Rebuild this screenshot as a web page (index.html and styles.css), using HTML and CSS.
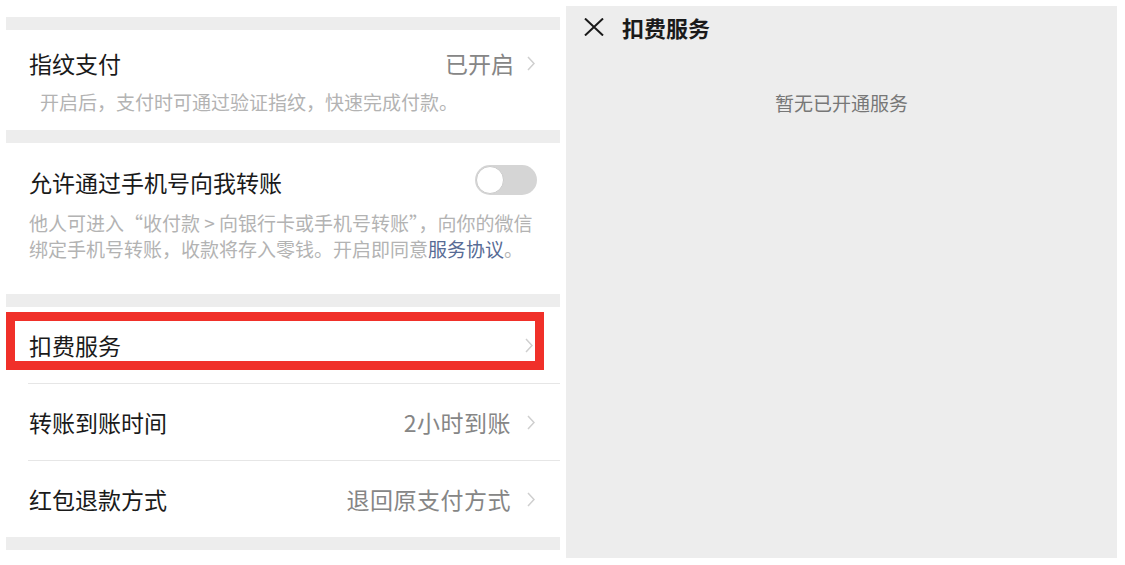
FILE: index.html
```html
<!DOCTYPE html>
<html lang="zh-CN">
<head>
    <meta charset="UTF-8">
    <title>支付设置</title>
    <link rel="stylesheet" href="styles.css">
</head>
<body>
    <div class="settings">
        <div class="top-space"></div>
        <div class="gap"></div>

        <section class="block fingerprint">
            <div class="row-head">
                <span class="title">指纹支付</span>
                <span class="value">已开启
                    <svg class="chev" width="8" height="15" viewBox="0 0 8 15"><polyline points="1,1 7,7.5 1,14" fill="none" stroke="#cfcfcf" stroke-width="1.5"/></svg>
                </span>
            </div>
            <p class="desc indent">开启后，支付时可通过验证指纹，快速完成付款。</p>
        </section>

        <div class="gap"></div>

        <section class="block phone">
            <div class="row-head">
                <span class="title">允许通过手机号向我转账</span>
                <span class="toggle"><span class="knob"></span></span>
            </div>
            <p class="desc">他人可进入“收付款 &gt; 向银行卡或手机号转账”，向你的微信<br>绑定手机号转账，收款将存入零钱。开启即同意<a href="#">服务协议</a>。</p>
        </section>

        <div class="gap"></div>

        <div class="list">
            <div class="item marked">
                <span class="title">扣费服务</span>
                <span class="value">
                    <svg class="chev" width="8" height="15" viewBox="0 0 8 15"><polyline points="1,1 7,7.5 1,14" fill="none" stroke="#cfcfcf" stroke-width="1.5"/></svg>
                </span>
                <div class="red-mark"></div>
            </div>
            <div class="item">
                <span class="title">转账到账时间</span>
                <span class="value wide">2小时到账
                    <svg class="chev" width="8" height="15" viewBox="0 0 8 15"><polyline points="1,1 7,7.5 1,14" fill="none" stroke="#cfcfcf" stroke-width="1.5"/></svg>
                </span>
            </div>
            <div class="item">
                <span class="title">红包退款方式</span>
                <span class="value wide">退回原支付方式
                    <svg class="chev" width="8" height="15" viewBox="0 0 8 15"><polyline points="1,1 7,7.5 1,14" fill="none" stroke="#cfcfcf" stroke-width="1.5"/></svg>
                </span>
            </div>
        </div>

        <div class="gap"></div>
    </div>

    <div class="service">
        <header class="service-head">
            <svg class="close" width="20" height="18" viewBox="0 0 20 18"><path d="M1 0.5 L19 17.5 M19 0.5 L1 17.5" stroke="#1a1a1a" stroke-width="2" fill="none"/></svg>
            <h1>扣费服务</h1>
        </header>
        <p class="empty">暂无已开通服务</p>
    </div>
</body>
</html>
```

FILE: styles.css
```css
body {
    margin: 0;
    padding: 6px;
    display: flex;
    gap: 6px;
    background-color: #fff;
    font-family: "Noto Sans CJK SC", "Noto Sans", sans-serif;
    color: #1a1a1a;
}

.settings {
    width: 554px;
    background-color: #fff;
}

.top-space {
    height: 11px;
}

.gap {
    height: 13px;
    background-color: #ededed;
}

.block {
    box-sizing: border-box;
    padding-left: 23px;
    padding-right: 25px;
}

.fingerprint {
    height: 100px;
    padding-top: 18px;
}

.phone {
    height: 151px;
    padding-top: 24px;
    padding-right: 23px;
}

.row-head {
    display: flex;
    justify-content: space-between;
    align-items: center;
}

.title {
    font-size: 23px;
    line-height: 30px;
    color: #1a1a1a;
}

.value {
    display: flex;
    align-items: center;
    gap: 13px;
    font-size: 23px;
    line-height: 30px;
    color: #868686;
}

.value.wide {
    gap: 16px;
    letter-spacing: 0.5px;
}

.chev {
    display: block;
}

.desc {
    margin: 11px 0 0;
    font-size: 19px;
    line-height: 26px;
    color: #b3b3b3;
}

.phone .desc {
    margin-top: 13px;
}

.indent {
    padding-left: 11px;
}

.desc a {
    color: #576b95;
    text-decoration: none;
}

.toggle {
    width: 62px;
    height: 30px;
    margin-top: -4px;
    border-radius: 15px;
    background-color: #d5d5d5;
    position: relative;
}

.knob {
    position: absolute;
    left: 1px;
    top: 1px;
    width: 26px;
    height: 26px;
    border-radius: 50%;
    background-color: #fff;
    border: 1px solid #cbcbcb;
}

.list {
    background-color: #fff;
}

.item {
    position: relative;
    height: 76px;
    display: flex;
    justify-content: space-between;
    align-items: center;
    padding-left: 23px;
    padding-right: 25px;
}

.item + .item {
    border-top: 1px solid #e6e6e6;
    margin-left: 22px;
    padding-left: 1px;
}

.marked .value {
    margin-right: 2px;
}

.red-mark {
    position: absolute;
    left: 0;
    top: 5px;
    width: 538px;
    height: 58px;
    box-sizing: border-box;
    border: 9px solid #f03029;
}

.service {
    width: 551px;
    height: 552px;
    background-color: #ededed;
}

.service-head {
    height: 42px;
    display: flex;
    align-items: center;
    padding-left: 18px;
    gap: 18px;
}

.close {
    display: block;
    margin-top: -1px;
}

.service-head h1 {
    margin: 0;
    font-size: 22px;
    line-height: 30px;
    font-weight: bold;
    color: #1a1a1a;
}

.empty {
    margin: 42px 0 0;
    text-align: center;
    font-size: 19px;
    line-height: 26px;
    color: #777;
}
```
